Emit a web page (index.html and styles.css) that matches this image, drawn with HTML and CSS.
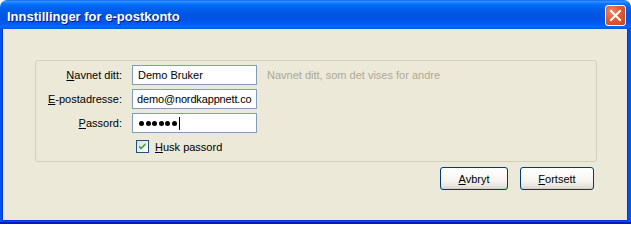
FILE: index.html
```html
<!DOCTYPE html>
<html>
<head>
<meta charset="utf-8">
<link rel="stylesheet" href="styles.css">
</head>
<body>
<div class="window">
  <div class="titlebar">
    <span class="title">Innstillinger for e-postkonto</span>
    <div class="close">
      <svg width="19" height="19" viewBox="0 0 19 19"><path d="M5 5 L14 14 M14 5 L5 14" stroke="#fff" stroke-width="2" stroke-linecap="square"/></svg>
    </div>
  </div>
  <div class="frame">
    <div class="content">
      <div class="group">
        <label class="lbl"><u>N</u>avnet ditt:</label>
        <div class="field">Demo Bruker</div>
        <span class="hint">Navnet ditt, som det vises for andre</span>
        <label class="lbl"><u>E</u>-postadresse:</label>
        <div class="field email">demo@nordkappnett.co</div>
        <span></span>
        <label class="lbl"><u>P</u>assord:</label>
        <div class="field pw"><span class="dot"></span><span class="dot"></span><span class="dot"></span><span class="dot"></span><span class="dot"></span><span class="dot"></span><span class="caret"></span></div>
        <span></span>
        <span></span>
        <div class="check-row">
          <span class="checkbox"><svg width="11" height="11" viewBox="0 0 11 11"><path d="M2 4.5 L4 6.5 L8.5 2 L8.5 4 L4 8.5 L2 6.5 Z" fill="#21a121"/></svg></span>
          <span><u>H</u>usk passord</span>
        </div>
      </div>
      <div class="actions">
        <button class="btn btn-cancel"><u>A</u>vbryt</button>
        <button class="btn btn-next"><u>F</u>ortsett</button>
      </div>
    </div>
  </div>
</div>
</body>
</html>
```

FILE: styles.css
```css
html, body {
  margin: 0;
  padding: 0;
  background: #ffffff;
}
.window {
  width: 631px;
  height: 224px;
  display: flex;
  flex-direction: column;
  font-family: "Liberation Sans", Arial, sans-serif;
  font-size: 11px;
  color: #000;
}
.titlebar {
  height: 29px;
  flex: none;
  display: flex;
  align-items: center;
  justify-content: space-between;
  padding: 0 5px 0 7px;
  border-radius: 7px 7px 0 0;
  background: linear-gradient(to bottom,
    #0058ee 0px, #3a93ff 1px, #288eff 2px, #127dff 3px, #036ffc 5px,
    #0262ee 8px, #0057e5 13px, #0054e3 17px, #0055eb 21px, #005bf5 24px,
    #026afe 26px, #0062ef 28px, #0052d6 29px);
  box-sizing: border-box;
}
.title {
  font-family: "Liberation Sans", Arial, sans-serif;
  font-weight: bold;
  font-size: 13px;
  color: #fff;
  text-shadow: 1px 1px 0 #0a1883;
  margin-top: 3px;
}
.close {
  width: 21px;
  height: 21px;
  box-sizing: border-box;
  border: 1px solid #fff;
  border-radius: 3px;
  background: radial-gradient(circle at 30% 30%, #ea8a6c 0%, #e15a35 45%, #c8431f 100%);
  display: flex;
  align-items: center;
  justify-content: center;
  margin-top: 2px;
}
.close svg { display: block; }
.frame {
  flex: 1;
  display: flex;
  background: #0053ea;
  padding: 0 4px 4px 3px;
  box-shadow: inset 0 -2px 0 #0019cf;
}
.content {
  flex: 1;
  background: #ece9d8;
  padding: 31px 30px 0 32px;
  box-shadow: -1px 0 0 #0831d9, 1px 0 0 #0831d9, 0 1px 0 #0831d9;
}
.group {
  height: 102px;
  box-sizing: border-box;
  border: 1px solid #d0d0bf;
  border-radius: 3px;
  padding: 4px 0 0 0;
  display: grid;
  grid-template-columns: 86px 125px 1fr;
  column-gap: 10px;
  row-gap: 4px;
  grid-template-rows: 20px 20px 20px auto;
  align-items: center;
}
.lbl {
  text-align: right;
}
.field {
  height: 20px;
  box-sizing: border-box;
  border: 1px solid #7f9db9;
  background: #fff;
  padding: 0 4px 0 5px;
  line-height: 18px;
  white-space: nowrap;
  overflow: hidden;
}
.email {
  padding-left: 4px;
  letter-spacing: -0.15px;
}
.pw {
  display: flex;
  align-items: center;
  padding-left: 6px;
}
.dot {
  width: 5px;
  height: 5px;
  border-radius: 50%;
  background: #000;
  margin-right: 1.5px;
}
.caret {
  width: 1px;
  height: 13px;
  background: #000;
  margin-left: 1px;
}
.hint {
  color: #aca899;
}
.check-row {
  display: flex;
  align-items: center;
  gap: 6px;
  padding-left: 4px;
  margin-top: 3px;
  align-self: start;
}
.checkbox {
  width: 13px;
  height: 13px;
  box-sizing: border-box;
  border: 1px solid #1c5180;
  background: linear-gradient(135deg, #dcdcd7 0%, #ffffff 100%);
  display: flex;
  align-items: center;
  justify-content: center;
}
.checkbox svg { display: block; }
.actions {
  display: flex;
  justify-content: flex-end;
  gap: 12px;
  margin-top: 5px;
  padding-right: 3px;
}
.btn {
  height: 23px;
  box-sizing: border-box;
  border: 1px solid #003c74;
  border-radius: 3px;
  background: linear-gradient(to bottom, #ffffff 0%, #f6f5f0 60%, #e3e2da 90%, #d6d0c5 100%);
  font-family: "Liberation Sans", Arial, sans-serif;
  font-size: 11px;
  color: #000;
  padding: 0;
  box-shadow: inset 0 -1px 0 #d6d0c5;
}
.btn-cancel { width: 68px; }
.btn-next { width: 74px; }
```
